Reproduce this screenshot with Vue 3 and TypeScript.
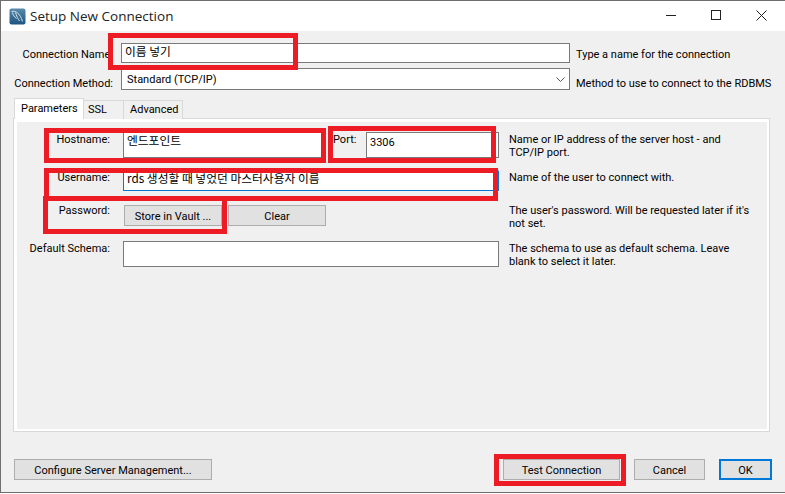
<script setup lang="ts">
const tabs = ['Parameters', 'SSL', 'Advanced']
const bottomLeft = 'Configure Server Management...'
const redBoxes = [
  { x: 108, y: 33, w: 190, h: 37 },
  { x: 44, y: 128, w: 282, h: 35 },
  { x: 328, y: 126, w: 168, h: 37 },
  { x: 44, y: 168, w: 454, h: 33 },
  { x: 43, y: 196, w: 184, h: 38 },
  { x: 494, y: 454, w: 132, h: 32 },
]
function boxStyle(b: { x: number; y: number; w: number; h: number }) {
  return { left: b.x + 'px', top: b.y + 'px', width: b.w + 'px', height: b.h + 'px' }
}
</script>

<template>
  <div class="screen">
    <div class="window">
      <header class="titlebar">
        <svg class="logo" width="17" height="17" viewBox="0 0 17 17">
          <defs>
            <linearGradient id="lg" x1="0" y1="0" x2="0" y2="1">
              <stop offset="0" stop-color="#5b8bab" />
              <stop offset="1" stop-color="#1d5480" />
            </linearGradient>
          </defs>
          <rect x="0.5" y="0.5" width="16" height="16" rx="2" fill="url(#lg)" />
          <path d="M2.5 3.5C6.5 2.5 11 5 13.5 13.5M3.5 4.5C4 7 5.5 9 7.5 10.5M6.5 4.5C7.5 8 9 11 10.5 13" fill="none" stroke="#cfe0ea" stroke-width="1" />
        </svg>
        <span class="title">Setup New Connection</span>
        <div class="controls">
          <svg width="10" height="10" viewBox="0 0 10 10"><path d="M0 5.5H10" stroke="#222" /></svg>
          <svg width="10" height="10" viewBox="0 0 10 10"><rect x="0.5" y="0.5" width="9" height="9" fill="none" stroke="#222" /></svg>
          <svg width="11" height="11" viewBox="0 0 11 11"><path d="M0.5 0.5L10.5 10.5M10.5 0.5L0.5 10.5" stroke="#222" /></svg>
        </div>
      </header>

      <main class="content">
        <div class="top-form">
          <label class="top-label first">Connection Name:</label>
          <div class="field name-field"><span class="ko">이름 넣기</span></div>
          <span class="help first">Type a name for the connection</span>
          <label class="top-label second">Connection Method:</label>
          <div class="field method-field">
            <span>Standard (TCP/IP)</span>
            <svg width="9" height="5" viewBox="0 0 9 5"><path d="M0.5 0.5L4.5 4.5L8.5 0.5" fill="none" stroke="#555" /></svg>
          </div>
          <span class="help second">Method to use to connect to the RDBMS</span>
        </div>

        <nav class="tabs">
          <span v-for="(t, i) in tabs" :key="t" class="tab" :class="{ active: i === 0 }">{{ t }}</span>
        </nav>

        <section class="pane">
          <div class="pane-inner">
            <div class="param-grid">
              <label class="plabel">Hostname:</label>
              <div class="host-port">
                <div class="field host"><span class="ko">엔드포인트</span></div>
                <label class="plabel port-label">Port:</label>
                <div class="field port">3306</div>
              </div>
              <p class="phelp">Name or IP address of the server host - and TCP/IP port.</p>

              <label class="plabel">Username:</label>
              <div class="field user"><span class="ko">rds 생성할 때 넣었던 마스터사용자 이름</span></div>
              <p class="phelp">Name of the user to connect with.</p>

              <label class="plabel pw-row">Password:</label>
              <div class="pw-buttons">
                <button class="btn pw">Store in Vault ...</button>
                <button class="btn pw">Clear</button>
              </div>
              <p class="phelp pw-row">The user's password. Will be requested later if it's not set.</p>

              <label class="plabel">Default Schema:</label>
              <div class="field schema"></div>
              <p class="phelp">The schema to use as default schema. Leave blank to select it later.</p>
            </div>
          </div>
        </section>

        <footer class="actions">
          <button class="btn configure">{{ bottomLeft }}</button>
          <button class="btn test">Test Connection</button>
          <button class="btn cancel">Cancel</button>
          <button class="btn ok">OK</button>
        </footer>
      </main>
    </div>

    <div v-for="(b, i) in redBoxes" :key="i" class="red" :style="boxStyle(b)"></div>
  </div>
</template>

<style>
html, body { margin: 0; padding: 0; background: #fff; }
</style>

<style scoped>
.screen {
  position: relative;
  width: 785px;
  height: 494px;
  overflow: hidden;
  background: #fff;
  font-family: Roboto, "Noto Sans CJK KR", sans-serif;
  font-size: 11px;
  color: #000;
}
.window {
  width: 785px;
  height: 493px;
  box-sizing: border-box;
  border-top: 1px solid #6e6e6e;
  border-left: 1px solid #6e6e6e;
  border-bottom: 1px solid #6e6e6e;
  display: flex;
  flex-direction: column;
}
.titlebar {
  height: 30px;
  flex: none;
  background: #fff;
  display: flex;
  align-items: center;
  padding-left: 8px;
}
.logo { flex: none; }
.title { margin-left: 4px; font-family: "Open Sans", sans-serif; font-size: 13.5px; color: #222; }
.controls { margin-left: auto; display: flex; align-items: center; gap: 35px; padding: 0 18px 2px 0; }
.content {
  flex: 1;
  background: #f0f0f0;
  display: flex;
  flex-direction: column;
}
.top-form {
  display: grid;
  grid-template-columns: 108px 449px 1fr;
  grid-template-rows: 20px 22px;
  row-gap: 5px;
  column-gap: 0;
  margin: 12px 0 0 12px;
  align-items: center;
}
.top-label { padding-right: 8px; white-space: nowrap; justify-self: end; }
.help { margin-left: 6px; white-space: nowrap; }
.first { padding-top: 2px; }
.second { padding-top: 8px; }
.field {
  box-sizing: border-box;
  background: #fff;
  border: 1px solid #7a7a7a;
  padding-left: 3px;
}
.name-field { height: 20px; line-height: 14px; }
.method-field {
  height: 22px;
  display: flex;
  align-items: center;
  justify-content: space-between;
  padding: 0 4px 0 5px;
}
.ko { font-family: "Noto Sans CJK KR", sans-serif; font-size: 11.75px; }
.tabs {
  display: flex;
  align-items: flex-end;
  height: 21px;
  margin: 8px 0 -1px 13px;
  position: relative;
  z-index: 1;
}
.tab {
  box-sizing: border-box;
  height: 19px;
  padding: 0 6px;
  line-height: 18px;
  border: 1px solid #d9d9d9;
  border-bottom: none;
  border-left: none;
  background: #f0f0f0;
}
.tab:nth-child(2) { width: 40px; padding-left: 4px; }
.tab:nth-child(3) { width: 59px; }
.tab.active {
  width: 70px;
  height: 21px;
  line-height: 19px;
  background: #fff;
  border: 1px solid #d9d9d9;
  border-bottom: none;
}
.pane {
  width: 757px;
  height: 314px;
  box-sizing: border-box;
  margin-left: 12px;
  border: 1px solid #d9d9d9;
  background: #fff;
  padding: 3px 2px 2px 3px;
}
.pane-inner {
  height: 100%;
  background: #f0f0f0;
  box-sizing: border-box;
  padding-top: 10px;
}
.param-grid {
  display: grid;
  grid-template-columns: 106px 376px 1fr;
  grid-template-rows: 38px 35px 36px 26px;
  align-items: start;
}
.plabel { justify-self: end; padding-right: 13px; white-space: nowrap; line-height: 14px; margin-top: 1px; }
.host-port { display: flex; }
.host { width: 202px; height: 26px; line-height: 14px; }
.plabel.port-label { margin: 1px 0 0 8px; padding-right: 0; width: 33px; }
.port { width: 133px; height: 26px; padding-top: 3px; }
.user { height: 21px; line-height: 13px; border-color: #fff #0078d7 #0078d7 #0078d7; }
.pw-buttons { display: flex; gap: 6px; padding-left: 1px; }
.schema { height: 26px; }
.phelp { margin: 1px 0 0 10px; width: 242px; line-height: 13px; }
.plabel.pw-row { margin-top: -1px; }
.phelp.pw-row { margin-top: -1px; }
.btn {
  box-sizing: border-box;
  height: 21px;
  padding: 1px 0 0;
  background: #e1e1e1;
  border: 1px solid #adadad;
  font: inherit;
  color: #000;
}
.pw { width: 98px; }
.actions {
  display: flex;
  margin: 27px 0 0 13px;
}
.configure { width: 198px; }
.test { width: 117px; margin-left: 291px; }
.cancel { width: 71px; margin-left: 14px; }
.ok { width: 53px; margin-left: 14px; border: 2px solid #0078d7; }
.red {
  position: absolute;
  box-sizing: border-box;
  border: 5px solid #ed1c24;
  pointer-events: none;
}
</style>
